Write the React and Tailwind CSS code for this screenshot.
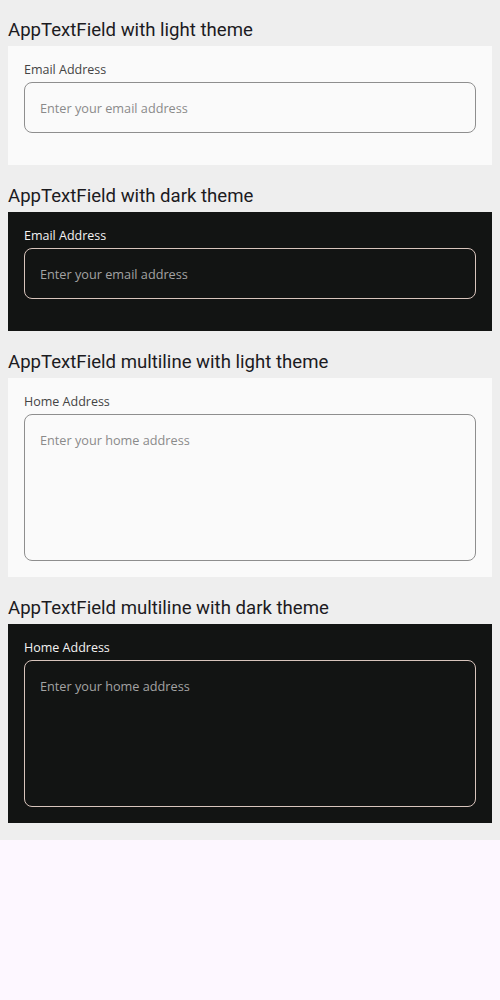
const FIELDS = [
  { title: 'AppTextField with light theme', label: 'Email Address', placeholder: 'Enter your email address', dark: false, multiline: false },
  { title: 'AppTextField with dark theme', label: 'Email Address', placeholder: 'Enter your email address', dark: true, multiline: false },
  { title: 'AppTextField multiline with light theme', label: 'Home Address', placeholder: 'Enter your home address', dark: false, multiline: true },
  { title: 'AppTextField multiline with dark theme', label: 'Home Address', placeholder: 'Enter your home address', dark: true, multiline: true },
];

function FieldDemo({ field, first }) {
  const { title, label, placeholder, dark, multiline } = field;
  return (
    <div>
      <h2
        className={`${first ? 'h-[46px] pt-[18px]' : 'h-[47px] pt-[19px]'} text-[18.6px] leading-[24px] text-[#1c1b1f]`}
        style={{ fontFamily: 'Roboto, sans-serif' }}
      >
        {title}
      </h2>
      <div className={`p-4 ${multiline ? 'h-[199px]' : 'h-[119px]'} ${dark ? 'bg-[#121413]' : 'bg-[#fafafa]'}`}>
        <label
          className={`block text-[12.5px] leading-[16px] mb-[4px] ${dark ? 'text-[#f2f2f2]' : 'text-[#444444]'}`}
          style={{ fontFamily: '"Open Sans", sans-serif' }}
        >
          {label}
        </label>
        <div
          className={`rounded-[8px] border px-[15px] ${multiline ? 'h-[147px] pt-[16px]' : 'h-[51px] flex items-center'} ${
            dark ? 'border-[#d8c4bc]' : 'border-[#8e8e8e]'
          }`}
        >
          <span
            className={`block text-[12.7px] leading-[18px] ${dark ? 'text-[#a3a3a3]' : 'text-[#8a8a8a]'}`}
            style={{ fontFamily: '"Open Sans", sans-serif' }}
          >
            {placeholder}
          </span>
        </div>
      </div>
    </div>
  );
}

export default function App() {
  return (
    <div className="w-[500px] min-h-[1000px] bg-[#fdf7ff]">
      <div className="bg-[#eeeeee] px-2 pb-[17px]">
        {FIELDS.map((f, i) => (
          <FieldDemo key={f.title} field={f} first={i === 0} />
        ))}
      </div>
    </div>
  );
}
